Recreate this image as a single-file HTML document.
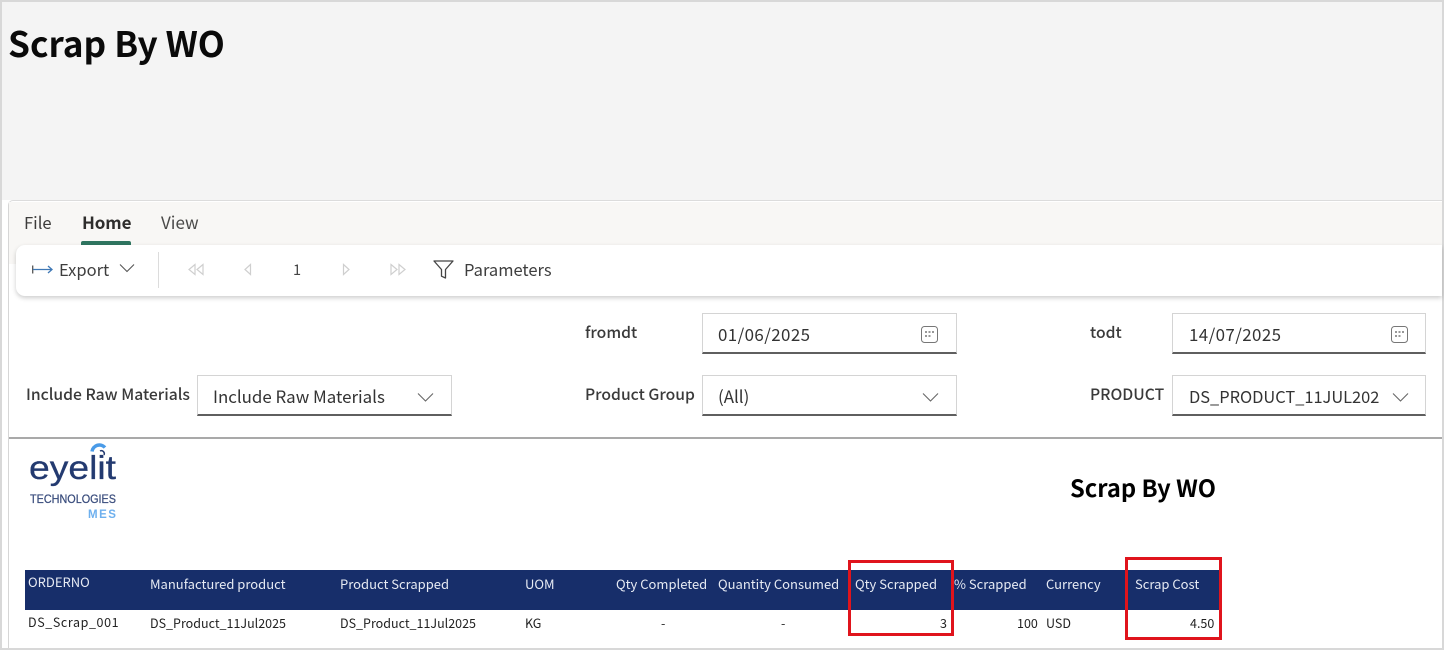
<!DOCTYPE html>
<html lang="en"><head><meta charset="utf-8"><title>Scrap By WO</title>
<style>
html,body{margin:0;padding:0;width:1444px;height:650px;overflow:hidden;background:#fff}
body{position:relative;font-family:"Noto Sans CJK JP","Liberation Sans",sans-serif;color:#252423}
.a{position:absolute;white-space:nowrap;line-height:1}
.box{position:absolute;box-sizing:border-box;background:#fff;border:1px solid #d4d4d4;border-bottom:2px solid #5f5f5f}
.lab{font-size:15.7px;font-weight:500;color:#3a3a3a}
.val{font-size:16.9px;color:#333}
.date{letter-spacing:.42px}
.h{font-size:13px;color:#e6eaf3}
.c{font-size:12.5px;color:#222}
svg{position:absolute;overflow:visible}
</style></head><body>
<div class="a" style="left:0;top:0;width:1444px;height:200px;background:#f4f4f4"></div>
<div class="a" style="left:8px;top:43px;font-size:35.2px;font-weight:700;color:#0a0a0a;line-height:0">Scrap By WO</div>
<div class="a" style="left:0;top:0;width:1444px;height:2px;background:#d8d8d8"></div>
<div class="a" style="left:0;top:0;width:2px;height:650px;background:#d8d8d8"></div>
<div class="a" style="left:1442px;top:0;width:2px;height:650px;background:#d8d8d8"></div>
<div class="a" style="left:0;top:648px;width:1444px;height:2px;background:#d8d8d8"></div>

<div class="a" style="left:8px;top:200px;width:1434px;height:448px;background:#fff;border-left:1px solid #d6d6d6;border-top:1px solid #dcdcdc;border-radius:5px 0 0 0;box-sizing:border-box"></div>
<div class="a" style="left:9px;top:202px;width:1433px;height:62px;background:#f8f7f5"></div>
<div class="a" style="left:24px;top:222px;font-size:16.6px;line-height:0;color:#3d3c3b">File</div>
<div class="a" style="left:82px;top:222px;font-size:17px;line-height:0;font-weight:700;color:#2e2d2c;letter-spacing:-.1px">Home</div>
<div class="a" style="left:161px;top:222px;font-size:17px;line-height:0;color:#4a4a49">View</div>
<div class="a" style="left:81px;top:241px;width:50px;height:4px;background:#2f7560;border-radius:2px 2px 0 0"></div>

<div class="a" style="left:16px;top:245px;width:1426px;height:51px;background:#fff;border-radius:9px 0 0 9px;box-shadow:0 2px 5px rgba(0,0,0,.2)"></div>
<svg style="left:32px;top:264px" width="22" height="12" fill="none" stroke-width="1.3"><path d="M.7 1.5v8" stroke="#555"/><path d="M1 5.5h19M16 2l4 3.5-4 3.5" stroke="#3f78b5"/></svg>
<div class="a" style="left:59px;top:269px;font-size:16.5px;line-height:0;color:#3e3e3e">Export</div>
<svg style="left:119px;top:263px" width="16" height="10" fill="none" stroke="#555" stroke-width="1.1"><path d="M1 1.5l7 7 7-7"/></svg>
<div class="a" style="left:158px;top:252px;width:1px;height:36px;background:#dcdcdc"></div>
<svg style="left:187px;top:263px" width="18" height="13" fill="none" stroke="#cfcfcf" stroke-width="1.2"><path d="M8 1.5L2 6.5l6 5zM16 1.5l-6 5 6 5z"/></svg>
<svg style="left:243px;top:263px" width="10" height="13" fill="none" stroke="#cfcfcf" stroke-width="1.2"><path d="M7.500 1.500l-5.500 5 5.500 5z"/></svg>
<div class="a" style="left:293px;top:270px;font-size:14.5px;line-height:0;color:#444">1</div>
<svg style="left:342px;top:263px" width="10" height="13" fill="none" stroke="#cfcfcf" stroke-width="1.2"><path d="M1.500 1.500l5.500 5-5.500 5z"/></svg>
<svg style="left:389px;top:263px" width="18" height="13" fill="none" stroke="#cfcfcf" stroke-width="1.200"><path d="M2 1.500l6 5-6 5zM10 1.500l6 5-6 5z"/></svg>
<svg style="left:433px;top:260px" width="22" height="20" fill="none" stroke="#444" stroke-width="1.300"><path d="M1 1h19l-7.500 8.500V18l-4-1.800V9.500z" stroke-linejoin="round"/></svg>
<div class="a" style="left:464px;top:269px;font-size:16.500px;line-height:0;color:#3e3e3e">Parameters</div>

<div class="a lab" style="left:585px;top:332px;line-height:0">fromdt</div>
<div class="box" style="left:702px;top:313px;width:255px;height:41px"></div>
<div class="a val date" style="left:718px;top:334px;line-height:0">01/06/2025</div>
<svg style="left:920px;top:325px" width="19" height="19" fill="none" stroke="#777"><rect x="1.500" y="1.500" width="16" height="16" rx="3"/><path d="M5 7h2M8.500 7h2M12 7h2M5 11h2M8.500 11h2" stroke-width="1.500"/></svg>

<div class="a lab" style="left:1090px;top:332px;line-height:0">todt</div>
<div class="box" style="left:1172px;top:313px;width:254px;height:41px"></div>
<div class="a val date" style="left:1189px;top:334px;line-height:0">14/07/2025</div>
<svg style="left:1390px;top:325px" width="19" height="19" fill="none" stroke="#777"><rect x="1.500" y="1.500" width="16" height="16" rx="3"/><path d="M5 7h2M8.500 7h2M12 7h2M5 11h2M8.500 11h2" stroke-width="1.500"/></svg>

<div class="a lab" style="left:26px;top:394px;line-height:0">Include Raw Materials</div>
<div class="box" style="left:197px;top:375px;width:255px;height:41px"></div>
<div class="a val" style="left:213px;top:396px;line-height:0">Include Raw Materials</div>
<svg style="left:417px;top:392px" width="17" height="11" fill="none" stroke="#666" stroke-width="1.100"><path d="M1 1.500l7.500 7.500L16 1.500"/></svg>

<div class="a lab" style="left:585px;top:394px;line-height:0">Product Group</div>
<div class="box" style="left:702px;top:375px;width:255px;height:41px"></div>
<div class="a val" style="left:718px;top:396px;line-height:0">(All)</div>
<svg style="left:922px;top:392px" width="17" height="11" fill="none" stroke="#666" stroke-width="1.100"><path d="M1 1.500l7.500 7.500L16 1.500"/></svg>

<div class="a lab" style="left:1090px;top:394px;line-height:0">PRODUCT</div>
<div class="box" style="left:1172px;top:375px;width:254px;height:41px"></div>
<div class="a val" style="left:1189px;top:396px;line-height:0;font-size:16.4px">DS_PRODUCT_11JUL202</div>
<svg style="left:1392px;top:392px" width="17" height="11" fill="none" stroke="#666" stroke-width="1.100"><path d="M1 1.500l7.500 7.500L16 1.500"/></svg>

<div class="a" style="left:9px;top:437px;width:1433px;height:2px;background:#a9a9a9"></div>

<svg style="left:25px;top:440px" width="100" height="85">
<path d="M67 11.500a7.500 7.500 0 0 1 13-4" fill="none" stroke="#4a9be8" stroke-width="3.500"/>
<path d="M75 11a3 3 0 0 1 4 4" fill="none" stroke="#233a70" stroke-width="1.500"/>
<text x="4" y="39" font-family="Liberation Sans,sans-serif" font-size="33" fill="#233a70" stroke="#233a70" stroke-width=".3" textLength="87" lengthAdjust="spacingAndGlyphs">eyelit</text>
<text x="5" y="63" font-family="Liberation Sans,sans-serif" font-size="12" fill="#3a4d7d" stroke="#3a4d7d" stroke-width=".25" textLength="86" lengthAdjust="spacingAndGlyphs">TECHNOLOGIES</text>
<text x="63" y="78" font-family="Liberation Sans,sans-serif" font-size="11.500" font-weight="700" fill="#6eb0ee" letter-spacing="1.500">MES</text>
</svg>

<div class="a" style="left:1070px;top:487px;font-size:23.7px;font-weight:700;line-height:0;color:#000">Scrap By WO</div>

<div class="a" style="left:25px;top:570px;width:1195px;height:40px;background:#172e6a"></div>
<div class="a h" style="left:28px;top:582px;line-height:0">ORDERNO</div>
<div class="a h" style="left:150px;top:584px;line-height:0">Manufactured product</div>
<div class="a h" style="left:340px;top:584px;line-height:0">Product Scrapped</div>
<div class="a h" style="left:525px;top:584px;line-height:0">UOM</div>
<div class="a h" style="left:616px;top:584px;line-height:0">Qty Completed</div>
<div class="a h" style="left:718px;top:584px;line-height:0">Quantity Consumed</div>
<div class="a h" style="left:855px;top:584px;line-height:0">Qty Scrapped</div>
<div class="a h" style="left:954px;top:584px;line-height:0">% Scrapped</div>
<div class="a h" style="left:1046px;top:584px;line-height:0">Currency</div>
<div class="a h" style="left:1135px;top:584px;line-height:0">Scrap Cost</div>

<div class="a c" style="left:28px;top:622px;line-height:0;letter-spacing:.6px">DS_Scrap_001</div>
<div class="a c" style="left:150px;top:623px;line-height:0">DS_Product_11Jul2025</div>
<div class="a c" style="left:340px;top:623px;line-height:0">DS_Product_11Jul2025</div>
<div class="a c" style="left:525px;top:623px;line-height:0">KG</div>
<div class="a c" style="left:661px;top:623px;line-height:0">-</div>
<div class="a c" style="left:781px;top:623px;line-height:0">-</div>
<div class="a c" style="left:940px;top:623px;line-height:0">3</div>
<div class="a c" style="left:1017px;top:623px;line-height:0">100</div>
<div class="a c" style="left:1046px;top:623px;line-height:0">USD</div>
<div class="a c" style="left:1190px;top:623px;line-height:0">4.50</div>

<div class="a" style="left:848px;top:560px;width:106px;height:76px;border:3px solid #e0141c;box-sizing:border-box"></div>
<div class="a" style="left:1125px;top:557px;width:97px;height:83px;border:3px solid #e0141c;box-sizing:border-box"></div>
</body></html>
